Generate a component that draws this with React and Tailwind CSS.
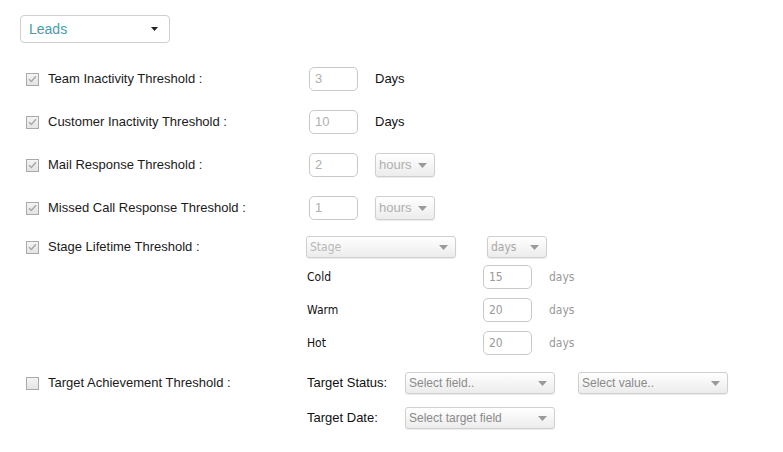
import React from 'react';

const arial = { fontFamily: '"Liberation Sans", Arial, sans-serif' };

function Check({ checked }) {
  return (
    <span className="w-[13px] h-[13px] border border-[#a9a9a9] bg-gradient-to-b from-[#f4f4f4] to-[#e4e4e4] flex items-center justify-center shrink-0">
      {checked && (
        <svg width="9" height="8" viewBox="0 0 9 8">
          <path d="M1 4.2 L3.4 6.5 L8 1.3" fill="none" stroke="#a8a8a8" strokeWidth="1.5" />
        </svg>
      )}
    </span>
  );
}

function Caret({ color = '#8a8a8a', w = 9, h = 5 }) {
  return (
    <svg width={w} height={h} viewBox={`0 0 ${w} ${h}`} className="shrink-0">
      <path d={`M0 0 L${w} 0 L${w / 2} ${h} Z`} fill={color} />
    </svg>
  );
}

function NumInput({ value, tahoma }) {
  return (
    <div
      className={`w-[49px] h-[24px] border border-[#c9c9c9] rounded-[5px] flex items-center pl-[5px] ${
        tahoma ? 'text-[12px] text-[#9a9a9a] font-["DejaVu_Sans_Condensed",Tahoma,sans-serif]' : 'text-[13px] text-[#b0b0b0] font-["Liberation_Sans",Arial,sans-serif]'
      }`}
    >
      {value}
    </div>
  );
}

function Select({ text, w, h = 'h-[22px]', textClass }) {
  return (
    <div
      className={`${w} ${h} border border-[#cfcfcf] rounded-[3px] bg-gradient-to-b from-white to-[#ececec] shadow-[0_1px_1px_rgba(0,0,0,0.08)] flex items-center justify-between pl-[3px] pr-[7px]`}
    >
      <span className={textClass}>{text}</span>
      <Caret color="#9a9a9a" />
    </div>
  );
}

function Label({ checked, children }) {
  return (
    <div className="w-[280px] flex items-center gap-[9px] text-[13px] text-[#1a1a1a]" style={arial}>
      <Check checked={checked} />
      <span>{children}</span>
    </div>
  );
}

export default function App() {
  const tahoma = 'font-["DejaVu_Sans_Condensed",Tahoma,sans-serif]';
  return (
    <div className="w-[783px] h-[452px] bg-white pt-[15px]" style={arial}>
      <div className="ml-[20px] w-[150px] h-[28px] border border-[#cfcfcf] rounded-[4px] flex items-center justify-between pl-[8px] pr-[11px]">
        <span className="text-[14px] text-[#3f9fa6]">Leads</span>
        <Caret color="#222" w={7} h={4} />
      </div>

      <div className="pl-[26px] mt-[24px] flex flex-col">
        <div className="flex items-center h-[24px]">
          <Label checked>Team Inactivity Threshold :</Label>
          <div className="ml-[3px]"><NumInput value="3" /></div>
          <span className="ml-[17px] text-[13px] text-[#111]">Days</span>
        </div>

        <div className="flex items-center h-[24px] mt-[19px]">
          <Label checked>Customer Inactivity Threshold :</Label>
          <div className="ml-[3px]"><NumInput value="10" /></div>
          <span className="ml-[17px] text-[13px] text-[#111]">Days</span>
        </div>

        <div className="flex items-center h-[24px] mt-[19px]">
          <Label checked>Mail Response Threshold :</Label>
          <div className="ml-[3px]"><NumInput value="2" /></div>
          <div className="ml-[17px]">
            <Select text="hours" w="w-[60px]" h="h-[24px]" textClass="text-[13px] text-[#b0b0b0]" />
          </div>
        </div>

        <div className="flex items-center h-[24px] mt-[19px]">
          <Label checked>Missed Call Response Threshold :</Label>
          <div className="ml-[3px]"><NumInput value="1" /></div>
          <div className="ml-[17px]">
            <Select text="hours" w="w-[60px]" h="h-[24px]" textClass="text-[13px] text-[#b0b0b0]" />
          </div>
        </div>

        <div className="flex items-center h-[22px] mt-[16px]">
          <Label checked>Stage Lifetime Threshold :</Label>
          <Select text="Stage" w="w-[150px]" textClass={`text-[12px] text-[#b8b8b8] ${tahoma}`} />
          <div className="ml-[31px]">
            <Select text="days" w="w-[60px]" textClass={`text-[12px] text-[#a8a8a8] ${tahoma}`} />
          </div>
        </div>

        {[
          ['Cold', '15', 'mt-[7px]'],
          ['Warm', '20', 'mt-[9px]'],
          ['Hot', '20', 'mt-[9px]'],
        ].map(([name, val, mt]) => (
          <div key={name} className={`flex items-center h-[24px] ${mt}`}>
            <div className="w-[281px]" />
            <span className={`w-[176px] text-[12px] text-[#111] ${tahoma}`}>{name}</span>
            <NumInput value={val} tahoma />
            <span className={`ml-[17px] text-[12px] text-[#999] ${tahoma}`}>days</span>
          </div>
        ))}

        <div className="flex items-center h-[22px] mt-[17px]">
          <Label>Target Achievement Threshold :</Label>
          <span className="w-[99px] pl-[1px] text-[13px] text-[#111]">Target Status:</span>
          <Select text="Select field.." w="w-[150px]" textClass="text-[12px] text-[#8a8a8a]" />
          <div className="ml-[23px]">
            <Select text="Select value.." w="w-[150px]" textClass="text-[12px] text-[#8a8a8a]" />
          </div>
        </div>

        <div className="flex items-center h-[22px] mt-[13px]">
          <div className="w-[280px]" />
          <span className="w-[99px] pl-[1px] text-[13px] text-[#111]">Target Date:</span>
          <Select text="Select target field" w="w-[150px]" textClass="text-[12px] text-[#8a8a8a]" />
        </div>
      </div>
    </div>
  );
}
